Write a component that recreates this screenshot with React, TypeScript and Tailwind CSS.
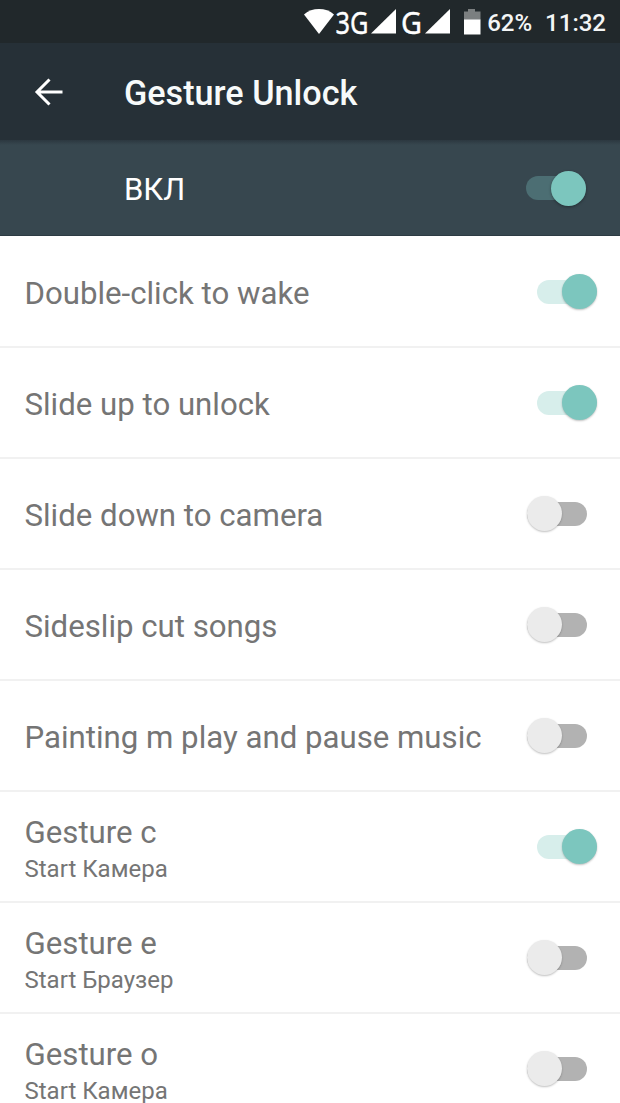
import clsx from "clsx";

interface Gesture {
  title: string;
  summary?: string;
  enabled: boolean;
}

const gestures: Gesture[] = [
  { title: "Double-click to wake", enabled: true },
  { title: "Slide up to unlock", enabled: true },
  { title: "Slide down to camera", enabled: false },
  { title: "Sideslip cut songs", enabled: false },
  { title: "Painting m play and pause music", enabled: false },
  { title: "Gesture c", summary: "Start Камера", enabled: true },
  { title: "Gesture e", summary: "Start Браузер", enabled: false },
  { title: "Gesture o", summary: "Start Камера", enabled: false },
];

interface ToggleProps {
  checked: boolean;
  label: string;
  dark?: boolean;
}

const Toggle = ({ checked, label, dark }: ToggleProps) => {
  return (
    <button
      type="button"
      role="switch"
      aria-checked={checked}
      aria-label={label}
      className={clsx(
        "flex h-6 w-15 shrink-0 items-center rounded-full",
        checked ? "justify-end" : "justify-start",
        !checked && "bg-[#b2b2b2]",
        checked && dark && "bg-[#4c6e73]",
        checked && !dark && "bg-[#d7eeeb]"
      )}
    >
      <span
        className={clsx(
          "size-[35px] shrink-0 rounded-full",
          checked ? "bg-[#7cc6be]" : "bg-[#ebebeb]",
          dark
            ? "shadow-[0_1px_3px_rgba(0,0,0,0.35)]"
            : "shadow-[0_1px_2px_rgba(0,0,0,0.25)]"
        )}
      />
    </button>
  );
};

const StatusBar = () => {
  return (
    <div className="flex h-[43px] items-center justify-end bg-[#21282b] pr-[14px] text-2xl font-medium text-[#f4f6f6]">
      <svg width="154" height="43" viewBox="0 0 154 43" fill="#fff">
        <path d="M5 14.500C13 7.200 27 7.200 35 14.500L20 34Z" />
        <text
          x="36.5"
          y="33.5"
          fontSize="31"
          fontWeight="400"
          fontFamily="Noto Sans, sans-serif"
          textLength="33"
          lengthAdjust="spacingAndGlyphs"
          stroke="#fff"
          strokeWidth="0.4"
        >
          3G
        </text>
        <path d="M72 33.500L97 9V33.500Z" />
        <text
          x="102"
          y="33.5"
          fontSize="31"
          fontWeight="400"
          fontFamily="Noto Sans, sans-serif"
          textLength="21"
          lengthAdjust="spacingAndGlyphs"
          stroke="#fff"
          strokeWidth="0.4"
        >
          G
        </text>
        <path d="M126 33.500L151 9V33.500Z" />
      </svg>
      <svg width="34" height="43" viewBox="0 0 34 43">
        <path d="M11 11.500H15V9H22V11.500H27.500V20H11Z" fill="#7b7f80" />
        <path d="M11 19.500H27.500V34.500H11Z" fill="#fff" />
      </svg>
      <span className="mt-[3px]">62%</span>
      <span className="mt-[3px] ml-[13px]">11:32</span>
    </div>
  );
};

const GestureRow = ({ title, summary, enabled }: Gesture) => {
  return (
    <li
      className={clsx(
        "flex h-[111px] shrink-0 items-center justify-between border-b-2 border-[#f1f1f1] pl-[24.5px]",
        enabled ? "pr-[23px]" : "pr-[33px]"
      )}
    >
      <div className={clsx("text-[#757575]", summary ? "pt-0.5" : "pt-1")}>
        <p className="text-[31.2px] leading-9">{title}</p>
        {summary && <p className="mt-1.5 text-2xl leading-6">{summary}</p>}
      </div>
      <Toggle checked={enabled} label={title} />
    </li>
  );
};

const App = () => {
  return (
    <div className="flex h-[1103px] w-[620px] flex-col overflow-hidden bg-white font-[Roboto,sans-serif]">
      <StatusBar />
      <header className="flex h-[97px] shrink-0 items-center bg-[#263037] pl-[34px] text-[#f7fafa]">
        <button type="button" aria-label="Back">
          <svg
            width="30"
            height="30"
            viewBox="0 0 30 30"
            fill="none"
            stroke="#fff"
            strokeWidth="3"
          >
            <path d="M28.500 15H3M15.500 2.500L3 15L15.500 27.500" />
          </svg>
        </button>
        <h1 className="ml-[60px] pt-1 text-[34.2px] font-medium">
          Gesture Unlock
        </h1>
      </header>
      <div className="h-[5px] shrink-0 bg-linear-to-b from-[#2c3840] to-[#37474f]" />
      <div className="flex h-[91px] shrink-0 items-center justify-between border-b border-[#2d3b43] bg-[#37474f] pr-[34px] pb-1 pl-[124px] text-white">
        <span className="pt-1 text-[31px]">ВКЛ</span>
        <Toggle checked dark label="Gesture Unlock" />
      </div>
      <ul className="flex flex-col pt-px">
        {gestures.map((gesture) => (
          <GestureRow key={gesture.title} {...gesture} />
        ))}
      </ul>
    </div>
  );
};

export default App;
